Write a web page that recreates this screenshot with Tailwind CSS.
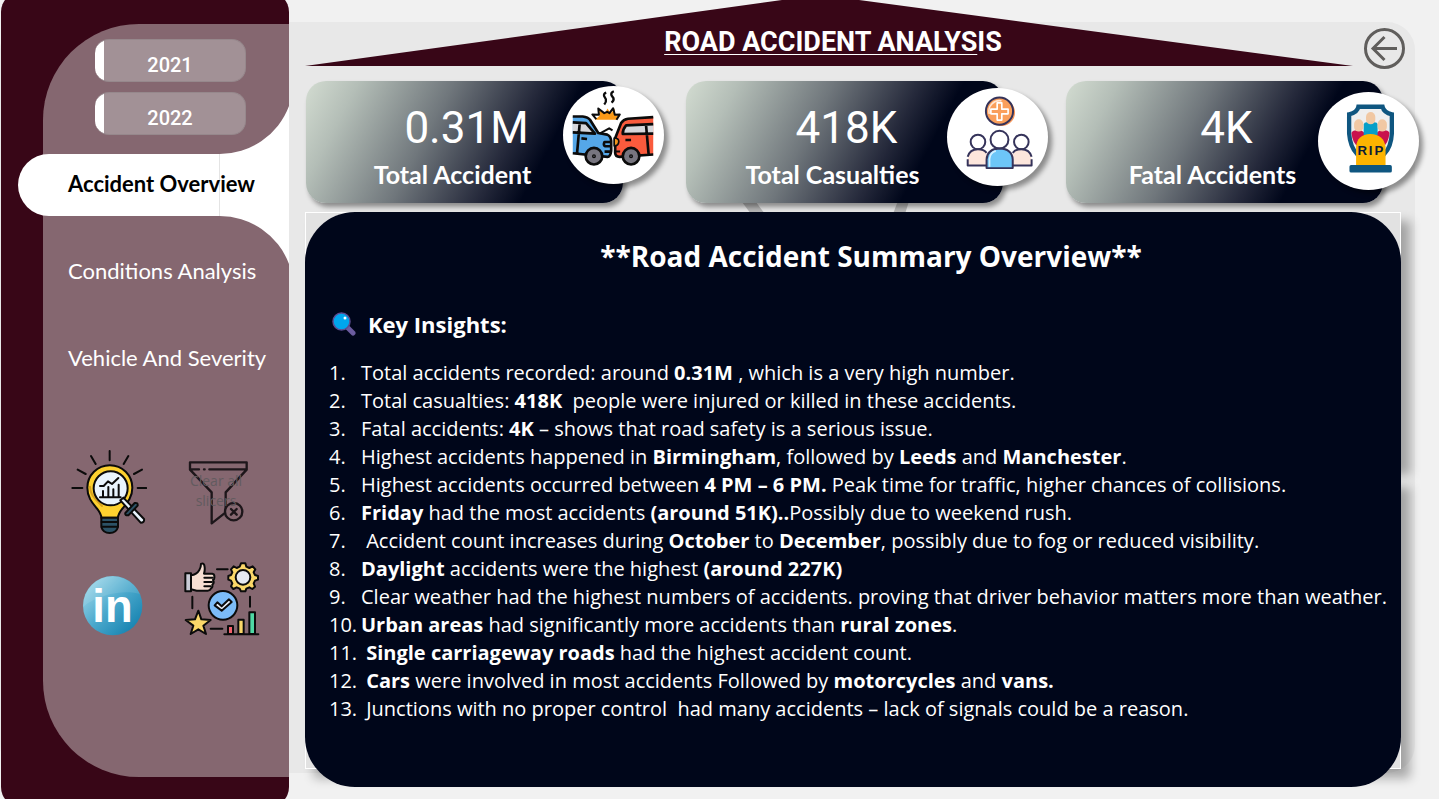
<!DOCTYPE html>
<html lang="en">
<head>
<meta charset="utf-8">
<meta name="viewport" content="width=device-width, initial-scale=1">
<title>Road Accident Analysis</title>
<script src="https://cdn.jsdelivr.net/npm/@tailwindcss/browser@4"></script>
</head>
<body class="bg-[#f1f1f1] font-['Open_Sans','Noto_Sans',sans-serif]">
<div class="relative flex min-h-screen overflow-hidden">

  <!-- canvas behind the report -->
  <div class="absolute top-[22px] bottom-[26px] left-0 right-6 rounded-[28px] bg-[#e8e8e8]"></div>

  <aside class="relative -my-2 ml-px flex w-[288px] shrink-0 flex-col rounded-[20px] bg-[#380617]">
    <div class="mt-8 mb-[30px] ml-[42px] flex grow flex-col rounded-l-[96px] bg-[#856770] pt-[15px]">
      <div class="ml-[52px] flex w-[151px] flex-col gap-[10px] font-['Roboto',sans-serif] text-xl font-medium text-white">
        <button type="button" class="h-[43px] overflow-hidden rounded-[14px] border border-[#96888c] border-l-0 bg-[linear-gradient(to_right,#fff_9px,#a29196_9px)] pt-2">2021</button>
        <button type="button" class="h-[43px] overflow-hidden rounded-[14px] border border-[#96888c] border-l-0 bg-[linear-gradient(to_right,#fff_9px,#a29196_9px)] pt-2">2022</button>
      </div>

      <nav class="mt-[19px] flex flex-col gap-[25px] font-['Lato',sans-serif] text-[22px] whitespace-nowrap text-white">
        <a href="#overview" aria-current="page" class="relative -ml-[25px] flex h-[62px] items-center rounded-l-full bg-white pb-1 pl-[50px] font-bold text-black">
          <svg class="absolute -top-12 right-0 h-[158px] w-[70px]" viewBox="0 0 70 158" aria-hidden="true">
            <path d="M0 48A74 74 0 0 0 70 0V158A74 74 0 0 0 0 110Z" fill="#fff"/>
            <path d="M.5 48V110" stroke="#e4e4e4"/>
          </svg>
          <span class="relative">Accident Overview</span>
        </a>
        <a href="#conditions" class="flex h-[62px] items-center pb-1 pl-[25px]">Conditions Analysis</a>
        <a href="#vehicle" class="flex h-[62px] items-center pb-1 pl-[25px]">Vehicle And Severity</a>
      </nav>

      <div class="mt-[60px] ml-7 grid grid-cols-[76px_76px] gap-x-[37px] gap-y-7">
        <button type="button" aria-label="Insights">
          <svg class="h-[84px] w-[76px]" viewBox="90 60 228 252" fill="none" stroke="#0b0b0b" stroke-width="6" stroke-linecap="round" stroke-linejoin="round">
            <path d="M206 63V91M150 78L164 102M262 78L248 102M110 119L134 132M303 119L279 132M94 174H124M290 174H316"/>
            <path d="M181 263C181 235 139 222 139 173A67 67 0 0 1 274 173C274 222 231 235 231 263Z" fill="#fdd12f"/>
            <path d="M183 228C165 208 148 198 147 170" stroke="#d8a31f" stroke-width="6"/>
            <path d="M181 263H231V291Q226 309 206 309Q186 309 181 291Z" fill="#2c5266"/>
            <path d="M182 276H230M183 290H229"/>
            <circle cx="209" cy="175" r="51" fill="#e9f4fd"/>
            <path d="M177 202H239M186 202V183M202 202V171M217 202V178M233 202V164M177 168L188 168L201 154L213 162L232 144"/>
            <path d="M238 211L247 203L309 267Q311 278 299 278Z" fill="#e9f4fd"/>
            <path d="M253 249Q251 257 262 256L290 227Q291 217 281 219Z" fill="#2c5266"/>
          </svg>
        </button>
        <button type="button" class="relative" aria-label="Clear all slicers">
          <svg class="h-[84px] w-[76px]" viewBox="432 60 228 252" fill="none" stroke="#1d161a" stroke-width="7" stroke-linecap="round" stroke-linejoin="round">
            <path d="M450 97H620V119L557 187V247L515 280V187L450 119ZM452 118H477M492 118H494M508 118H618"/>
            <circle cx="581" cy="245" r="26" fill="#856770"/>
            <path d="M573 237L590 254M590 237L573 254"/>
          </svg>
          <span class="absolute inset-x-0 top-[21px] pr-3 text-sm leading-5 text-[#625b5f]">Clear all slicers</span>
        </button>
        <a href="#linkedin" aria-label="LinkedIn">
          <svg class="h-[74px] w-[76px]" viewBox="93 396 228 222">
            <defs>
              <linearGradient id="ball" x1="0" y1="0" x2="1" y2="1"><stop offset="0" stop-color="#b0e2f0"/><stop offset=".5" stop-color="#4aa8cc"/><stop offset="1" stop-color="#0878a8"/></linearGradient>
            </defs>
            <circle cx="218" cy="527" r="89" fill="url(#ball)"/>
            <path d="M130 530A89 89 0 0 1 300 492C255 478 175 492 130 530Z" fill="#fff" opacity=".1"/>
            <text x="157" y="575" font-family="Liberation Sans, sans-serif" font-weight="700" font-size="136" fill="#fff">in</text>
          </svg>
        </a>
        <button type="button" aria-label="Recommendations">
          <svg class="h-[74px] w-[76px]" viewBox="432 396 228 222" fill="none" stroke="#0b0b0b" stroke-width="6" stroke-linecap="round" stroke-linejoin="round">
            <path d="M531 418H563M457 500V535M630 500V530M512 596H547"/>
            <path d="M436 430H453V484H436Z" fill="#c9cbd6"/>
            <path d="M453 436Q470 434 478 420Q483 412 483 402Q493 397 494 412Q495 422 492 431H517Q524 432 523 441Q524 448 519 450Q524 458 517 464Q519 472 513 475Q511 482 503 482H470L453 478Z" fill="#f7dfd2"/>
            <path d="M493 443H518M493 456H516M493 469H512"/>
            <path d="M603 400H616L619 410L628 414L638 409L646 418L641 427L645 435L654 438V449L645 452L641 460L645 470L637 477L628 472L619 476L616 484H603L599 476L590 472L580 477L573 469L577 460L573 452L565 449V438L573 435L577 427L573 418L581 409L590 414L599 410Z" fill="#fbd869"/>
            <circle cx="609" cy="442" r="22" fill="#e6e9f0"/>
            <circle cx="549" cy="526" r="43" fill="#7cbcf8"/>
            <path d="M524 526L532 517L545 529L567 508L575 516L545 542Z" fill="#eef4fb"/>
            <path d="M475 542L484 568L512 570L490 587L498 612L475 598L452 612L460 587L437 570L465 568Z" fill="#fbd869"/>
            <path d="M564 588H579V612H564Z" fill="#f4606c"/>
            <path d="M595 569H611V612H595Z" fill="#fbd869"/>
            <path d="M628 547H645V612H628Z" fill="#4fd8a4"/>
            <path d="M553 613H655"/>
          </svg>
        </button>
      </div>
    </div>
  </aside>

  <main class="relative flex min-w-0 grow flex-col pl-4">
    <!-- traces of the background drawing -->
    <svg class="absolute top-[198px] left-[450px] h-4 w-44" viewBox="0 0 176 16" aria-hidden="true">
      <path d="M0 0H14L26 16H12ZM160 0H171L166 16H154Z" fill="#b5b5b5"/>
    </svg>

    <header class="flex h-[81px] items-start gap-[11px] pr-[34px]">
      <div class="relative flex h-[66px] min-w-0 grow justify-center">
        <svg class="absolute inset-0 h-full w-full" viewBox="0 0 1048 66" preserveAspectRatio="none" aria-hidden="true">
          <path d="M0 66L477 0H554L1048 66Z" fill="#380617"/>
        </svg>
        <h1 class="relative pt-6 pl-2 font-['Roboto',sans-serif] text-[27px] leading-9 font-bold whitespace-nowrap text-white"><span class="underline decoration-1 underline-offset-3">ROAD ACCIDENT ANALYS</span>IS</h1>
      </div>
      <button type="button" aria-label="Back" class="mt-7 shrink-0">
        <svg class="size-[41px]" viewBox="0 0 41 41" fill="none" stroke="#605e5c" stroke-width="3">
          <circle cx="20.500" cy="20.500" r="19"/>
          <path d="M33 20.500H9M20.500 9L9 20.500L20.500 32"/>
        </svg>
      </button>
    </header>

    <section class="grid grid-cols-3 gap-[63px] pr-14 pl-px text-white">
      <article class="relative h-[122px] rounded-[20px] bg-[linear-gradient(118deg,#d3dcd1_0%,#b4beb7_14%,#70777c_39%,#24283a_62%,#00061a_73%)] text-center shadow-[3px_4px_5px_rgba(0,0,0,0.4)]">
        <p class="pt-[19px] pl-1 font-['Roboto',sans-serif] text-[44px] leading-14">0.31M</p>
        <h2 class="pr-6 font-['Lato',sans-serif] text-[25px] leading-9 font-bold">Total Accident</h2>
        <div class="absolute top-[5px] -right-[41px] h-[98px] w-[101px] rounded-[50%] bg-white shadow-[4px_4px_5px_rgba(0,0,0,0.4)]">
          <svg class="h-full w-full" viewBox="68 50 304 296" fill="none" stroke="#0b0b0b" stroke-width="8" stroke-linejoin="round" aria-hidden="true">
            <path d="M198 70Q189 73 192 81L197 90Q199 98 192 106M221 66Q211 70 214 78L220 87Q222 94 214 100" stroke-width="7"/>
            <path d="M164 152L178 140L176 122L193 133L202 118L211 133L224 119L224 138L240 139L230 152Z" fill="#fb9a17" stroke="none"/>
            <path d="M168 150L156 136L176 137L174 118L192 132L201 128L208 132L219 117L224 137L239 136L229 152" stroke-width="6"/>
            <path d="M97 142H127Q143 144 149 152L174 192L201 197Q212 202 213 216V246Q211 264 202 264L97 252Z" fill="#55a7e8" stroke="none"/>
            <path d="M97 161H138Q146 164 165 195L97 190Z" fill="#d6d7db" stroke="none"/>
            <path d="M97 142H127Q143 144 149 152L174 192L201 197Q212 202 213 216V246Q211 264 202 264L97 253M97 160L137 162L164 194L97 190M118 162L110 252M123 208L140 210M213 219H193Q188 229 195 232H211M211 248H193"/>
            <path d="M340 144L264 149Q250 151 243 162L225 208V252Q226 264 238 264L340 257Z" fill="#fa5b3d" stroke="none"/>
            <path d="M340 166L257 170L248 195L340 195Z" fill="#d6d7db" stroke="none"/>
            <path d="M340 144L264 149Q250 151 243 162L225 208V252Q226 264 238 264L340 257M340 165L258 169Q247 182 248 195L340 194M318 165L326 255M273 213H256"/>
            <path d="M222 207Q236 207 236 218Q235 231 222 231Z" fill="#f0951b" stroke-width="5"/>
            <path d="M224 248H240M178 194L207 178L217 184" stroke-width="6"/>
            <circle cx="161" cy="262" r="25" fill="#77757f"/>
            <circle cx="273" cy="262" r="25" fill="#77757f"/>
            <circle cx="161" cy="262" r="2"/><circle cx="273" cy="262" r="2"/>
          </svg>
        </div>
      </article>

      <article class="relative h-[122px] rounded-[20px] bg-[linear-gradient(118deg,#d3dcd1_0%,#b4beb7_14%,#70777c_39%,#24283a_62%,#00061a_73%)] text-center shadow-[3px_4px_5px_rgba(0,0,0,0.4)]">
        <p class="pt-[19px] pl-1 font-['Roboto',sans-serif] text-[44px] leading-14">418K</p>
        <h2 class="pr-6 font-['Lato',sans-serif] text-[25px] leading-9 font-bold">Total Casualties</h2>
        <div class="absolute top-[7px] -right-[45px] h-[98px] w-[101px] rounded-[50%] bg-white shadow-[4px_4px_5px_rgba(0,0,0,0.4)]">
          <svg class="h-full w-full" viewBox="51 56 300 296" fill="none" stroke="#35335a" stroke-width="6" stroke-linejoin="round" aria-hidden="true">
            <circle cx="213" cy="130" r="41" fill="#f6965a" stroke="none"/>
            <circle cx="207" cy="126" r="41" fill="#fa9f5b"/>
            <path d="M176 134A32 32 0 0 1 213 95" stroke="#ffe5d2" stroke-width="5"/>
            <path d="M200 101H214V120H233V134H214V153H200V134H181V120H200Z" stroke="#fff" stroke-width="5"/>
            <circle cx="142" cy="219" r="22"/><circle cx="273" cy="219" r="22"/><circle cx="207" cy="212" r="27"/>
            <path d="M111 290V274Q113 242 142 241Q160 241 168 252V290Z" fill="#fde6dc" stroke="none"/>
            <path d="M304 290V274Q302 242 273 241Q255 241 247 252V290Z" fill="#fde6dc" stroke="none"/>
            <path d="M111 264Q117 241 142 241Q160 241 168 252M111 271V290H168M304 264Q298 241 273 241Q255 241 247 252M304 271V290H247"/>
            <path d="M168 298V272Q170 240 207 239Q245 240 247 272V298Z" fill="#6dc6f8"/>
            <path d="M177 294V270Q179 250 196 246" stroke="#d5f0ff" stroke-width="5"/>
          </svg>
        </div>
      </article>

      <article class="relative h-[122px] rounded-[20px] bg-[linear-gradient(118deg,#d3dcd1_0%,#b4beb7_14%,#70777c_39%,#24283a_62%,#00061a_73%)] text-center shadow-[3px_4px_5px_rgba(0,0,0,0.4)]">
        <p class="pt-[19px] pl-1 font-['Roboto',sans-serif] text-[44px] leading-14">4K</p>
        <h2 class="pr-6 font-['Lato',sans-serif] text-[25px] leading-9 font-bold">Fatal Accidents</h2>
        <div class="absolute top-[11px] -right-[36px] h-[98px] w-[101px] rounded-[50%] bg-white shadow-[4px_4px_5px_rgba(0,0,0,0.4)]">
          <svg class="h-full w-full" viewBox="52 276 305 293" aria-hidden="true">
            <path d="M174 319H247Q251 337 275 342V400Q273 440 252 462H170Q149 440 146 400V342Q171 337 174 319Z" fill="#efefef" stroke="#0f5680" stroke-width="13"/>
            <path d="M153 398Q155 389 175 389Q193 389 197 412L175 440Q157 432 153 398Z" fill="#c9114d"/>
            <path d="M268 398Q266 389 246 389Q228 389 225 412L247 440Q264 432 268 398Z" fill="#c9114d"/>
            <path d="M190 405V373Q191 366 199 366H222Q231 366 232 373V405Z" fill="#069fc8"/>
            <rect x="197" y="335" width="28" height="37" rx="14" fill="#f1c8a3"/>
            <rect x="161" y="357" width="28" height="37" rx="14" fill="#f1c8a3"/>
            <rect x="232" y="357" width="28" height="37" rx="14" fill="#f1c8a3"/>
            <path d="M167 496V440Q170 402 210 401Q251 402 256 440V496Z" fill="#fdb400"/>
            <rect x="147" y="495" width="128" height="23" rx="5" fill="#0f5680"/>
            <text x="186 211 236" y="466" text-anchor="middle" font-family="Liberation Sans, sans-serif" font-weight="700" font-size="40" fill="#0c1c36">RIP</text>
          </svg>
        </div>
      </article>
    </section>

    <section class="relative mt-[9px] mr-[38px] mb-3 grow">
      <div class="absolute inset-x-0 top-0 h-[254px] shadow-[9px_9px_10px_rgba(0,0,0,0.3)]"></div>
      <div class="absolute inset-x-0 top-[266px] bottom-[18px] shadow-[9px_9px_10px_rgba(0,0,0,0.3)]"></div>
      <div class="absolute inset-x-0 top-0 bottom-[18px] border border-white bg-[#e2e2e2]"></div>
      <div class="relative h-full rounded-[50px] bg-[#00061a] pt-6 pr-2 pb-14 pl-6 text-white">
        <h2 class="pl-5 text-center text-[28px] leading-10 font-bold">**Road Accident Summary Overview**</h2>
        <h3 class="mt-8 flex items-center gap-3 pl-[3px] text-[22px] leading-8 font-bold">
          <svg class="size-6" viewBox="0 0 24 24" aria-hidden="true">
            <path d="M16 16L21 21" stroke="#6b5ca0" stroke-width="5" stroke-linecap="round"/>
            <circle cx="9.500" cy="9.500" r="8.500" fill="#00a6ed" stroke="#5c4d91" stroke-width="1.500"/>
            <circle cx="13" cy="6" r="1.500" fill="#fff"/>
          </svg>
          Key Insights:
        </h3>
        <ol class="mt-[19px] text-xl leading-7">
          <li class="flex"><span class="w-8 shrink-0">1.</span><span class="whitespace-pre-wrap">Total accidents recorded: around <b>0.31M</b> , which is a very high number.</span></li>
          <li class="flex"><span class="w-8 shrink-0">2.</span><span class="whitespace-pre-wrap">Total casualties: <b>418K</b>  people were injured or killed in these accidents.</span></li>
          <li class="flex"><span class="w-8 shrink-0">3.</span><span class="whitespace-pre-wrap">Fatal accidents: <b>4K</b> – shows that road safety is a serious issue.</span></li>
          <li class="flex"><span class="w-8 shrink-0">4.</span><span class="whitespace-pre-wrap">Highest accidents happened in <b>Birmingham</b>, followed by <b>Leeds</b> and <b>Manchester</b>.</span></li>
          <li class="flex"><span class="w-8 shrink-0">5.</span><span class="whitespace-pre-wrap">Highest accidents occurred between <b>4 PM – 6 PM.</b> Peak time for traffic, higher chances of collisions.</span></li>
          <li class="flex"><span class="w-8 shrink-0">6.</span><span class="whitespace-pre-wrap"><b>Friday</b> had the most accidents <b>(around 51K)..</b>Possibly due to weekend rush.</span></li>
          <li class="flex"><span class="w-8 shrink-0">7.</span><span class="whitespace-pre-wrap"> Accident count increases during <b>October</b> to <b>December</b>, possibly due to fog or reduced visibility.</span></li>
          <li class="flex"><span class="w-8 shrink-0">8.</span><span class="whitespace-pre-wrap"><b>Daylight</b> accidents were the highest <b>(around 227K)</b></span></li>
          <li class="flex"><span class="w-8 shrink-0">9.</span><span class="whitespace-pre-wrap">Clear weather had the highest numbers of accidents. proving that driver behavior matters more than weather.</span></li>
          <li class="flex"><span class="w-8 shrink-0">10.</span><span class="whitespace-pre-wrap"><b>Urban areas</b> had significantly more accidents than <b>rural zones</b>.</span></li>
          <li class="flex"><span class="w-8 shrink-0">11.</span><span class="whitespace-pre-wrap"> <b>Single carriageway roads</b> had the highest accident count.</span></li>
          <li class="flex"><span class="w-8 shrink-0">12.</span><span class="whitespace-pre-wrap"> <b>Cars</b> were involved in most accidents Followed by <b>motorcycles</b> and <b>vans.</b></span></li>
          <li class="flex"><span class="w-8 shrink-0">13.</span><span class="whitespace-pre-wrap"> Junctions with no proper control  had many accidents – lack of signals could be a reason.</span></li>
        </ol>
      </div>
    </section>
  </main>
</div>
</body>
</html>
